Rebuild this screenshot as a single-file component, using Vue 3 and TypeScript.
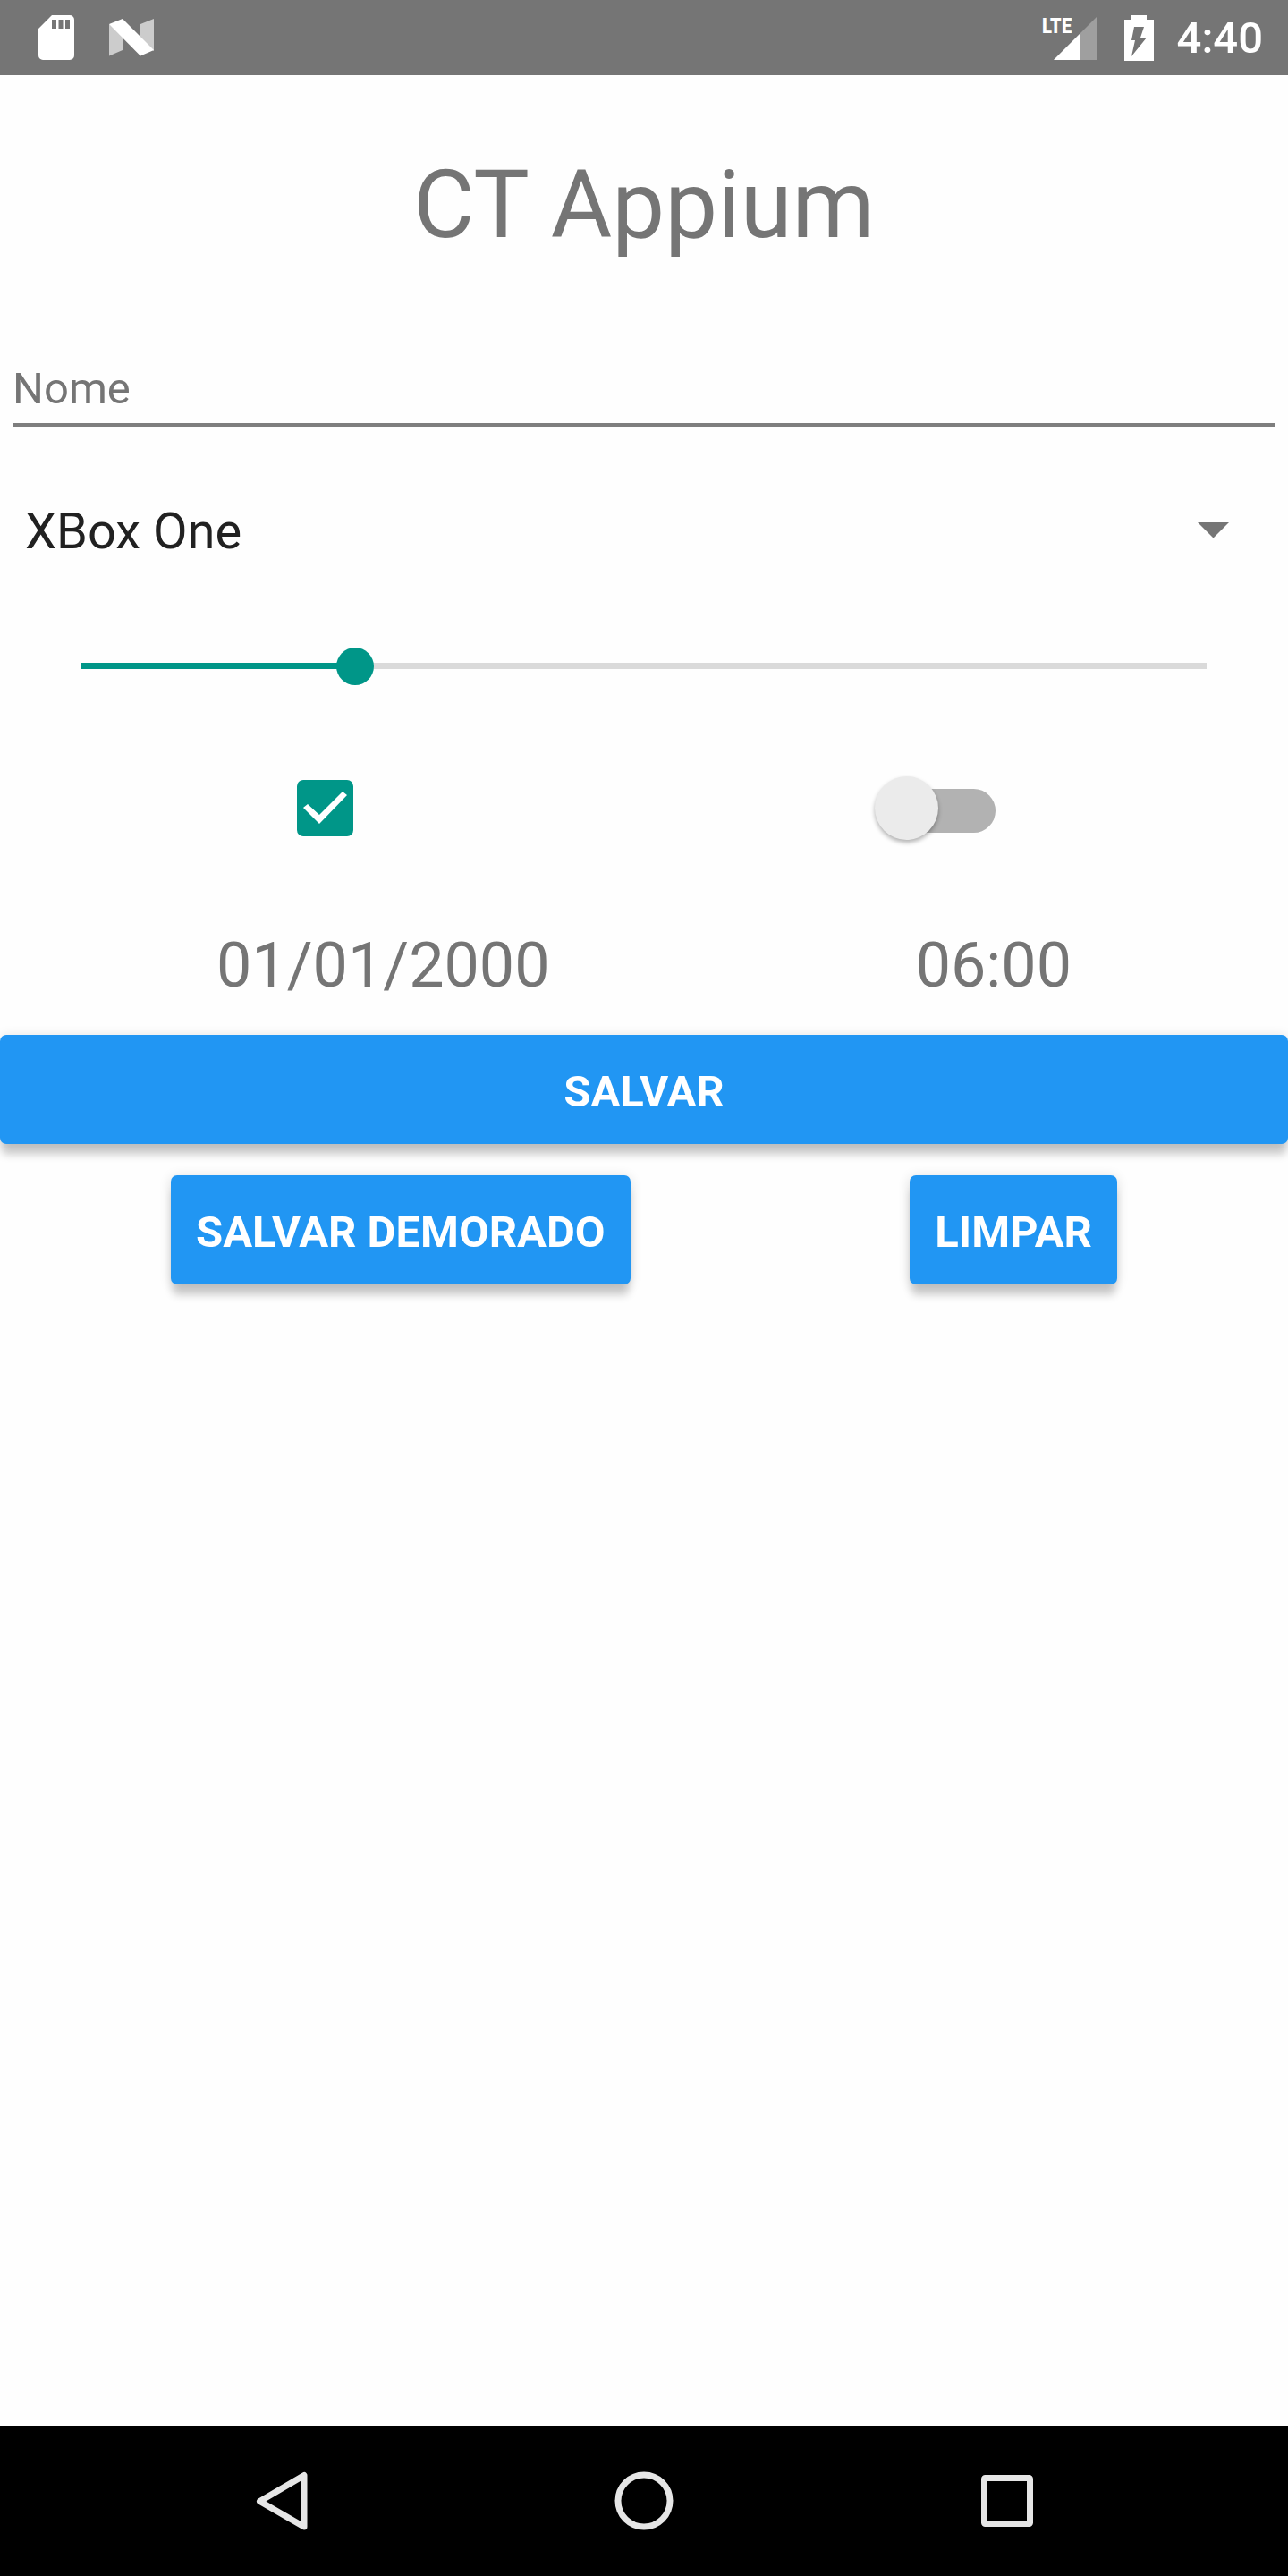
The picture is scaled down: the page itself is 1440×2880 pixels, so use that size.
<script setup lang="ts">
import { computed, ref } from 'vue'

const initial = { name: '', console: 'xbox', level: 243, active: true, enabled: false }

const name = ref<string>(initial.name)
const consoleName = ref<string>(initial.console)
const level = ref<number>(initial.level)
const active = ref<boolean>(initial.active)
const enabled = ref<boolean>(initial.enabled)
const date = ref<string>('01/01/2000')
const time = ref<string>('06:00')

const consoles: { id: string; label: string }[] = [
  { id: 'xbox', label: 'XBox One' },
  { id: 'ps4', label: 'PS4' },
  { id: 'switch', label: 'Nintendo Switch' },
]

const levelRatio = computed(() => String(level.value / 1000))

function reset(): void {
  name.value = initial.name
  consoleName.value = initial.console
  level.value = initial.level
  active.value = initial.active
  enabled.value = initial.enabled
}
</script>

<template>
  <div class="screen">
    <header class="status-bar">
      <div class="status-group notifications">
        <svg class="sd-icon" viewBox="0 0 40 50" aria-hidden="true">
          <path fill="#fff" fill-rule="evenodd" d="M15 0H35a5 5 0 0 1 5 5V45a5 5 0 0 1-5 5H5a5 5 0 0 1-5-5V15ZM15 5V15H20V5ZM22.500 5V15H27.500V5ZM30 5V15H35V5Z" />
        </svg>
        <svg class="n-icon" viewBox="0 0 50 42" aria-hidden="true">
          <path fill="#ccc" d="M0 6L15 15V35L0 41.500ZM35 6L50 0V36L35 27Z" />
          <path fill="#fff" d="M0 6L15 0L50 35L35 41.500Z" />
        </svg>
      </div>
      <div class="status-group">
        <div class="signal">
          <span class="network">LTE</span>
          <svg class="signal-icon" viewBox="0 0 49 49" aria-hidden="true">
            <path fill="#9f9f9f" d="M49 0V49H0Z" />
            <path fill="#fff" d="M29.500 19.500V49H0Z" />
          </svg>
        </div>
        <svg class="battery-icon" viewBox="0 0 33 51" aria-hidden="true">
          <path fill="#fff" fill-rule="evenodd" d="M8 0H25V5H33V51H0V5H8ZM11 13L8 28H12L8 46L25 25H18L22 13Z" />
        </svg>
        <time class="clock">4:40</time>
      </div>
    </header>

    <main class="content">
      <h1 class="title">CT Appium</h1>

      <input v-model="name" class="name-field" type="text" placeholder="Nome" aria-label="Nome" />

      <div class="picker">
        <select v-model="consoleName" class="picker-select" aria-label="Console">
          <option v-for="item in consoles" :key="item.id" :value="item.id">{{ item.label }}</option>
        </select>
        <svg class="picker-arrow" viewBox="0 0 35 18" aria-hidden="true">
          <path fill="#757575" d="M0 0H35L17.500 17.500Z" />
        </svg>
      </div>

      <input
        v-model.number="level"
        class="slider"
        type="range"
        min="0"
        max="1000"
        aria-label="Nível"
        :style="{ '--ratio': levelRatio }"
      />

      <div class="toggles">
        <input v-model="active" class="check" type="checkbox" aria-label="Ativo" />
        <input v-model="enabled" class="switch" type="checkbox" role="switch" aria-label="Habilitado" />
      </div>

      <div class="schedule">
        <button type="button" class="value">{{ date }}</button>
        <button type="button" class="value">{{ time }}</button>
      </div>

      <button type="button" class="action wide">SALVAR</button>
      <div class="actions">
        <button type="button" class="action">SALVAR DEMORADO</button>
        <button type="button" class="action" @click="reset">LIMPAR</button>
      </div>
    </main>

    <nav class="nav-bar" aria-label="Sistema">
      <button type="button" class="nav-button" aria-label="Voltar">
        <svg class="nav-icon" viewBox="0 0 84 84" aria-hidden="true">
          <path fill="none" stroke="#e6e6e6" stroke-width="7" stroke-linejoin="round" d="M68 13.500V71L18.500 42.500Z" />
        </svg>
      </button>
      <button type="button" class="nav-button" aria-label="Início">
        <svg class="nav-icon" viewBox="0 0 84 84" aria-hidden="true">
          <circle cx="42" cy="42" r="29" fill="none" stroke="#e6e6e6" stroke-width="7" />
        </svg>
      </button>
      <button type="button" class="nav-button" aria-label="Recentes">
        <svg class="nav-icon" viewBox="0 0 84 84" aria-hidden="true">
          <rect x="16.500" y="16.500" width="51" height="51" rx="1" fill="none" stroke="#e6e6e6" stroke-width="7" stroke-linejoin="round" />
        </svg>
      </button>
    </nav>
  </div>
</template>

<style>
body {
  margin: 0;
  background: #fefefe;
}
</style>

<style scoped>
.screen {
  display: flex;
  flex-direction: column;
  min-height: 100vh;
  font-family: Roboto, 'Noto Sans', sans-serif;
  color: #757575;
}

button,
input,
select {
  box-sizing: border-box;
  margin: 0;
  padding: 0;
  border: 0;
  border-radius: 0;
  background: none;
  font-family: inherit;
  outline: none;
  appearance: none;
}

svg {
  display: block;
  flex: none;
}

/* status bar */
.status-bar {
  display: flex;
  justify-content: space-between;
  align-items: center;
  height: 84px;
  padding: 0 28px 0 43px;
  background: #757575;
  color: #fff;
}

.status-group {
  display: flex;
  align-items: center;
}

.notifications {
  gap: 39px;
}

.sd-icon {
  width: 40px;
  height: 50px;
}

.n-icon {
  width: 50px;
  height: 42px;
}

.signal {
  position: relative;
  margin-right: 30px;
}

.signal-icon {
  width: 49px;
  height: 49px;
}

.network {
  position: absolute;
  right: 28px;
  top: -1px;
  font: bold 24px/24px 'Roboto Condensed', 'Liberation Sans Narrow', Roboto, sans-serif;
}

.battery-icon {
  width: 33px;
  height: 51px;
  margin-right: 26px;
}

.clock {
  font-size: 49px;
  font-weight: 500;
  line-height: 57px;
}

/* form */
.content {
  display: flex;
  flex: 1;
  flex-direction: column;
}

.title {
  margin: 84px 0 0;
  font-size: 105px;
  font-weight: 400;
  line-height: 123px;
  text-align: center;
}

.name-field {
  height: 71px;
  margin: 115px 14px 0;
  padding-bottom: 10px;
  border-bottom: 4px solid #7e7e7e;
  color: #212121;
  font-size: 49px;
  line-height: 57px;
}

.name-field::placeholder {
  color: #757575;
  opacity: 1;
}

.picker {
  position: relative;
  margin-top: 84px;
}

.picker-select {
  display: block;
  width: 100%;
  height: 66px;
  padding: 0 112px 0 28px;
  color: #212121;
  font-size: 56px;
  line-height: 66px;
}

.picker-arrow {
  position: absolute;
  top: 23px;
  right: 66px;
  width: 35px;
  height: 18px;
  pointer-events: none;
}

.slider {
  height: 42px;
  margin: 97px 70px 0;
  background:
    linear-gradient(#009688, #009688) 21px 17px / calc((100% - 42px) * var(--ratio)) 7px no-repeat,
    linear-gradient(#dadada, #dadada) 21px 17px / calc(100% - 42px) 7px no-repeat;
}

.slider::-webkit-slider-thumb {
  width: 42px;
  height: 42px;
  border-radius: 50%;
  background: #009688;
  appearance: none;
}

.toggles,
.schedule,
.actions {
  display: flex;
  justify-content: space-between;
  align-items: center;
}

.toggles {
  margin-top: 102px;
  padding: 0 327px 0 332px;
}

.check {
  width: 63px;
  height: 63px;
  border: 7px solid #757575;
  border-radius: 7px;
}

.check:checked {
  border: 0;
  background: #009688;
}

.check:checked::before {
  display: block;
  width: 63px;
  height: 63px;
  background: #fff;
  clip-path: polygon(7px 31px, 12px 27px, 25px 39px, 51px 13px, 56px 17px, 25px 49px);
  content: '';
}

.switch {
  position: relative;
  width: 135px;
  height: 71px;
}

.switch::before {
  position: absolute;
  top: 14px;
  right: 0;
  left: 8px;
  height: 49px;
  border-radius: 25px;
  background: #b2b2b2;
  content: '';
}

.switch::after {
  position: absolute;
  top: 0;
  left: 0;
  width: 71px;
  height: 71px;
  border-radius: 50%;
  background: #ebebeb;
  box-shadow: 0 3px 5px rgba(0, 0, 0, 0.3);
  content: '';
}

.switch:checked::before {
  background: #80cbc4;
}

.switch:checked::after {
  right: 0;
  left: auto;
  background: #009688;
}

.schedule {
  margin-top: 99px;
  padding: 0 242px;
}

.value {
  color: inherit;
  font-size: 70px;
  line-height: 82px;
}

.action {
  padding: 35px 28px 30px;
  border-radius: 7px;
  background: #2196f3;
  box-shadow:
    0 14px 10px -2px rgba(0, 0, 0, 0.18),
    0 2px 14px rgba(0, 0, 0, 0.14);
  color: #fff;
  font-size: 49px;
  font-weight: 700;
  line-height: 57px;
}

.wide {
  width: 100%;
  margin-top: 37px;
}

.actions {
  margin-top: 35px;
  padding: 0 191px;
}

/* navigation bar */
.nav-bar {
  display: flex;
  height: 168px;
  padding: 0 111px;
  background: #000;
}

.nav-button {
  display: flex;
  flex: 1;
  justify-content: center;
  align-items: center;
}

.nav-icon {
  width: 84px;
  height: 84px;
}
</style>
